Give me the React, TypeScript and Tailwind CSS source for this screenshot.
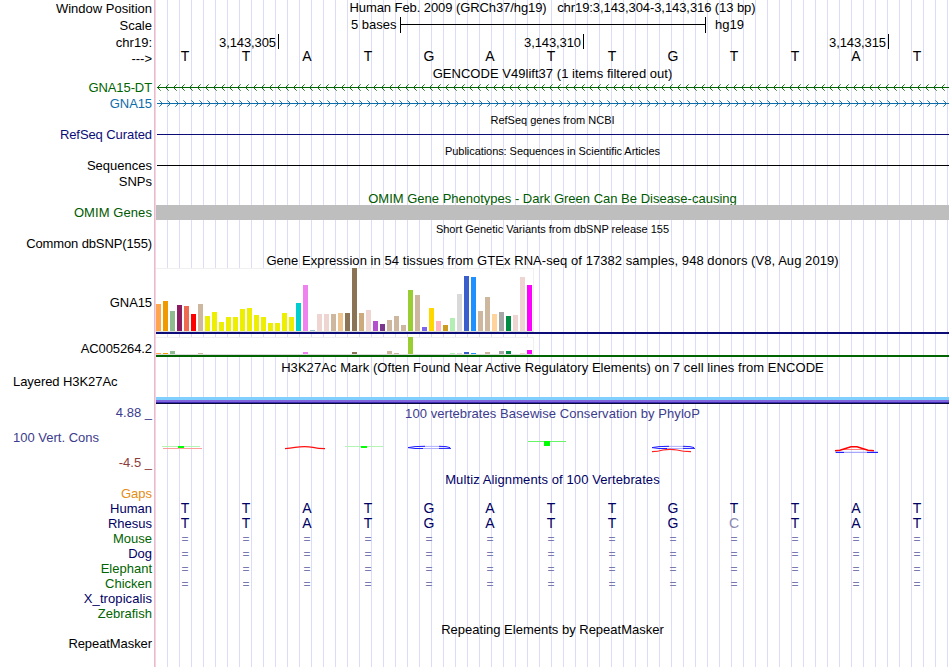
import React from "react";

const GTEX: [number, number, string][] = [
  [27, 1, "#ffa54f"], [30, 1, "#ee9a00"], [20, 3, "#8fbc8f"], [26, 0, "#8b1c62"], [25, 0, "#ee6a50"],
  [17, 0, "#ff0000"], [27, 1, "#cdb79e"], [15, 0, "#eeee00"], [19, 0, "#eeee00"], [9, 0, "#eeee00"],
  [14, 0, "#eeee00"], [14, 0, "#eeee00"], [22, 0, "#eeee00"], [23, 0, "#eeee00"], [16, 0, "#eeee00"],
  [14, 0, "#eeee00"], [8, 0, "#eeee00"], [8, 0, "#eeee00"], [18, 0, "#eeee00"], [14, 0, "#eeee00"],
  [28, 0, "#00cdcd"], [46, 2, "#ee82ee"], [1, 0, "#9ac0cd"], [17, 0, "#eed5d2"], [17, 0, "#eed5d2"],
  [17, 0, "#cdb79e"], [18, 0, "#eec591"], [18, 0, "#8b7355"], [63, 2, "#8b7355"], [18, 0, "#cdaa7d"],
  [21, 0, "#eed5d2"], [10, 0, "#b452cd"], [7, 0, "#7a378b"], [11, 3, "#cdb79e"], [15, 1, "#cdb79e"],
  [6, 0, "#cdb79e"], [41, 17, "#9acd32"], [36, 0, "#cdb79e"], [4, 0, "#7a67ee"], [23, 0, "#ffd700"],
  [10, 0, "#ffb6c1"], [6, 0, "#cd9b1d"], [13, 1, "#b4eeb4"], [37, 1, "#d9d9d9"], [55, 2, "#3a5fcd"],
  [54, 1, "#1e90ff"], [20, 0, "#cdb79e"], [34, 2, "#cdb79e"], [17, 0, "#ffd39b"], [19, 3, "#a6a6a6"],
  [15, 3, "#008b45"], [16, 0, "#eed5d2"], [54, 1, "#eed5d2"], [46, 4, "#ff00ff"],
];

function Label({ className = "", children }: { className?: string; children: React.ReactNode }) {
  return <div className={`h-[15px] w-full shrink-0 pr-[2px] text-right ${className}`}>{children}</div>;
}

function Title({ className = "", children }: { className?: string; children: React.ReactNode }) {
  return (
    <div className={`h-[15px] shrink-0 text-center ${className}`}>
      <span>{children}</span>
    </div>
  );
}

function Bases({ seq, className = "", muted = "" }: { seq: string; className?: string; muted?: string }) {
  return (
    <div className={`-ml-px flex h-[15px] shrink-0 text-[14px] ${className}`}>
      {seq.split("").map((b, i) => (
        <span key={i} className={`w-[61px] shrink-0 pl-px text-center ${b === "C" ? muted : ""}`}>
          {b}
        </span>
      ))}
    </div>
  );
}

function Unaligned() {
  return (
    <div className="-ml-px flex h-[15px] shrink-0 pt-px text-[12px] text-[#7878b0]">
      {Array.from({ length: 13 }, (_, i) => (
        <span key={i} className="w-[61px] shrink-0 pl-px text-center">
          =
        </span>
      ))}
    </div>
  );
}

function Strand({ dir, color, className = "" }: { dir: "left" | "right"; color: string; className?: string }) {
  return (
    <svg width="793" height="7" className={`ml-px block shrink-0 ${className}`} shapeRendering="crispEdges" fill={color}>
      <rect x="1" y="3" width="792" height="1" />
      {Array.from({ length: 99 }, (_, i) => {
        const tip = dir === "left" ? 1 + i * 8 : 6 + i * 8;
        const s = dir === "left" ? 1 : -1;
        return [1, 2, 3].map((d) => (
          <React.Fragment key={`${i}-${d}`}>
            <rect x={tip + s * d} y={3 - d} width="1" height="1" opacity={d === 3 ? 0.6 : 0.9} />
            <rect x={tip + s * d} y={3 + d} width="1" height="1" opacity={d === 3 ? 0.6 : 0.9} />
          </React.Fragment>
        ));
      })}
    </svg>
  );
}

function Bars({ gene, className }: { gene: 0 | 1; className: string }) {
  return (
    <div className={`ml-px flex w-[378px] shrink-0 items-end gap-[2px] border-t border-r border-b border-[#f0f0f0] border-b-[#dcdcdc] bg-white ${className}`}>
      {GTEX.map((t, i) => (
        <div key={i} className="w-[5px] shrink-0" style={{ height: t[gene], backgroundColor: t[2] }} />
      ))}
    </div>
  );
}

function Conservation() {
  return (
    <svg width="795" height="51" viewBox="155 421 795 51" className="block shrink-0" fill="none">
      <path d="M162 446.5H200" stroke="#b4f5b4" />
      <path d="M163 448.5H202" stroke="#ff9c9c" />
      <path d="M178 446h6v2h-6z" fill="#00ff00" />
      <path d="M285 448.6Q290 448.5 295 447.4Q305 445.7 313 447.4Q318 448.6 325 448.6" stroke="#ff1010" strokeWidth="1.2" />
      <path d="M345 446.5H383" stroke="#b4f5b4" />
      <path d="M361 446h6v2h-6z" fill="#00ff00" />
      <path d="M528 441.5H566" stroke="#66f566" />
      <path d="M544 441h6v5h-6z" fill="#00ff00" />
      {[408, 652].map((x) => (
        <g key={x}>
          <path d={`M${x + 12} 446.4H${x + 33}M${x + 10} 448.5H${x + 36}`} stroke="#b0b0ff" />
          <path d={`M${x + 17} 446.3L${x + 7} 446.6L${x} 447.6L${x + 7} 448.5H${x + 15}M${x + 31} 446.3L${x + 38} 446.6L${x + 42} 447.6M${x + 31} 448.4H${x + 43}`} stroke="#2020ff" />
        </g>
      ))}
      <path d="M652 451.6Q658 451.5 663 450Q670 448.8 677 450Q683 451.5 691 451.6" stroke="#ff2020" strokeWidth="1.1" />
      <path d="M842 449.5H866" stroke="#ff8080" />
      <path d="M835 450.8L840 450.3L851 446.7H857L868 450.3L874 450.8" stroke="#ff0000" strokeWidth="1.5" />
      <path d="M835 452.3H878" stroke="#9090ff" />
      <path d="M836 452.4H844M867 452.4H878" stroke="#1010ff" />
    </svg>
  );
}

function RulerTick({ label, className }: { label: string; className: string }) {
  return (
    <div className={`flex h-[15px] shrink-0 justify-end border-r border-black pr-[2px] tracking-[-0.1px] ${className}`}>
      <span className="pt-px">{label}</span>
    </div>
  );
}

export default function App() {
  return (
    <div className="flex h-[667px] w-[950px] overflow-hidden bg-white font-['Liberation_Sans',Arial,sans-serif] text-[13px] leading-[15px] whitespace-pre text-black">
      <div className="flex w-[154px] shrink-0 flex-col">
        <Label className="mt-px">Window Position</Label>
        <Label className="mt-[2px]">Scale</Label>
        <Label className="mt-[2px]">chr19:</Label>
        <Label className="pt-px">{"--->"}</Label>
        <Label className="mt-[15px] tracking-[-0.1px] text-[#006400]">GNA15-DT</Label>
        <Label className="mt-px tracking-[-0.1px] text-[#0e6cab]">GNA15</Label>
        <Label className="mt-4 tracking-[-0.08px] text-[#0c0c78]">RefSeq Curated</Label>
        <Label className="mt-4">Sequences</Label>
        <Label className="mt-px">SNPs</Label>
        <Label className="mt-4 tracking-[0.08px] text-[#005a00]">OMIM Genes</Label>
        <Label className="mt-4 tracking-[-0.12px]">Common dbSNP(155)</Label>
        <Label className="mt-11 tracking-[-0.1px]">GNA15</Label>
        <Label className="mt-[31px] tracking-[-0.1px]">AC005264.2</Label>
        <div className="mt-[18px] h-[15px] shrink-0 pl-[13px] tracking-[-0.07px]">Layered H3K27Ac</div>
        <Label className="mt-4 text-[#3c3c8c]">4.88 _</Label>
        <div className="mt-[10px] h-[15px] shrink-0 pl-[13px] text-[#3c3c8c]">100 Vert. Cons</div>
        <Label className="mt-[10px] text-[#8c3c3c]">-4.5 _</Label>
        <Label className="mt-4 text-[#e68c14]">Gaps</Label>
        <Label className="text-[#000064]">Human</Label>
        <Label className="text-[#000064]">Rhesus</Label>
        <Label className="text-[#006400]">Mouse</Label>
        <Label className="text-[#000064]">Dog</Label>
        <Label className="text-[#006400]">Elephant</Label>
        <Label className="text-[#006400]">Chicken</Label>
        <Label className="tracking-[0.08px] text-[#000064]">X_tropicalis</Label>
        <Label className="text-[#006400]">Zebrafish</Label>
        <Label className="mt-[15px] tracking-[-0.08px]">RepeatMasker</Label>
      </div>
      <div className="w-px shrink-0 bg-[#ffb4b4]" />
      <div className="flex w-[795px] shrink-0 flex-col bg-[linear-gradient(to_right,#dcdcf8_1px,transparent_1px)] bg-[length:12px_100%] bg-[position:12px_0]">
        <Title className="tracking-[-0.08px]">{"Human Feb. 2009 (GRCh37/hg19)   chr19:3,143,304-3,143,316 (13 bp)"}</Title>
        <div className="mt-[2px] flex h-4 shrink-0 pl-[196px]">
          <span className="w-[49px] shrink-0">5 bases</span>
          <div className="flex w-[306px] items-center border-x border-black pb-px">
            <div className="h-px w-full bg-black" />
          </div>
          <span className="pl-[9px]">hg19</span>
        </div>
        <div className="mt-px flex h-[15px] shrink-0">
          <RulerTick label="3,143,305" className="w-[124px]" />
          <RulerTick label="3,143,310" className="w-[305px]" />
          <RulerTick label="3,143,315" className="w-[305px]" />
        </div>
        <Bases seq="TTATGATTGTTAT" />
        <Title className="mt-[2px] tracking-[0.03px]">GENCODE V49lift37 (1 items filtered out)</Title>
        <Strand dir="left" color="#006400" className="mt-[3px]" />
        <Strand dir="right" color="#0e6cab" className="mt-[9px]" />
        <Title className="mt-[6px] text-[11px]">RefSeq genes from NCBI</Title>
        <div className="mt-[6px] mr-px ml-[2px] h-px shrink-0 bg-[#0c0c78]" />
        <Title className="mt-[9px] text-[11px] tracking-[-0.06px]">Publications: Sequences in Scientific Articles</Title>
        <div className="mt-[6px] mr-px ml-[2px] h-px shrink-0 bg-black" />
        <div className="mt-[25px] h-[14px] shrink-0 overflow-hidden text-center text-[#005a00]">
          OMIM Gene Phenotypes - Dark Green Can Be Disease-causing
        </div>
        <div className="mr-px ml-px h-[15px] shrink-0 bg-[#bebebe]" />
        <Title className="mt-[2px] text-[11px]">Short Genetic Variants from dbSNP release 155</Title>
        <Title className="mt-4 tracking-[0.055px]">Gene Expression in 54 tissues from GTEx RNA-seq of 17382 samples, 948 donors (V8, Aug 2019)</Title>
        <Bars gene={0} className="h-16" />
        <div className="mr-px ml-px h-[2px] shrink-0 bg-[#0c0c78]" />
        <Bars gene={1} className="mt-[3px] h-[18px]" />
        <div className="mr-px ml-px h-[2px] shrink-0 bg-[#006400]" />
        <Title className="mt-[3px] tracking-[0.06px]">H3K27Ac Mark (Often Found Near Active Regulatory Elements) on 7 cell lines from ENCODE</Title>
        <div className="mt-[22px] mr-px ml-px shrink-0">
          <div className="h-[3px] bg-[#7fd0ff]" />
          <div className="h-[2px] bg-[#8064dc]" />
          <div className="h-px bg-[#3c2cb4]" />
          <div className="h-px bg-[#08083c]" />
        </div>
        <Title className="mt-[2px] tracking-[0.06px] text-[#3c3c8c]">100 vertebrates Basewise Conservation by PhyloP</Title>
        <Conservation />
        <Title className="tracking-[0.1px] text-[#000064]">Multiz Alignments of 100 Vertebrates</Title>
        <Bases seq="TTATGATTGTTAT" className="mt-[14px] text-[#000064]" />
        <Bases seq="TTATGATTGCTAT" className="text-[#000064]" muted="text-[#8c8cb4]" />
        <Unaligned />
        <Unaligned />
        <Unaligned />
        <Unaligned />
        <Title className="mt-[31px]">Repeating Elements by RepeatMasker</Title>
      </div>
    </div>
  );
}
